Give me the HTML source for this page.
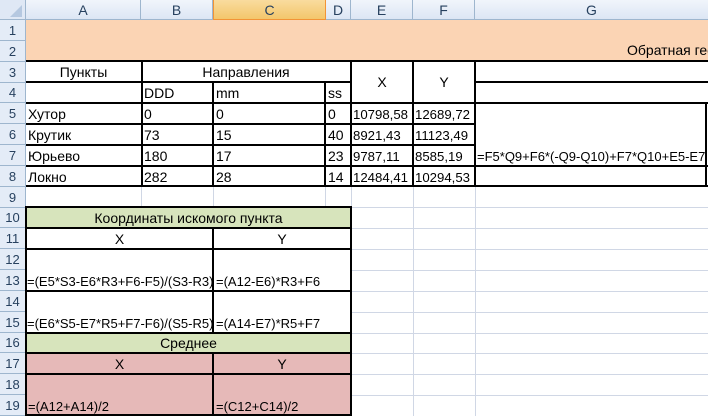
<!DOCTYPE html>
<html><head><meta charset="utf-8"><style>
*{margin:0;padding:0;box-sizing:border-box}
body{width:708px;height:416px;overflow:hidden;background:#fff;position:relative;font-family:"Liberation Sans","DejaVu Sans",sans-serif;font-size:14px;color:#000}
div{position:absolute}
.g{background:#d0d7e5}
.k{background:#000}
.t{white-space:nowrap;line-height:15px}
.n{font-size:13.2px}
.f{font-size:13px}
.hd{background:linear-gradient(#f1f5fb,#dce6f4);color:#27415f;font-size:14px;text-align:center}
.rh{left:0;width:26px;text-align:center;color:#27415f;font-size:13px;line-height:20px;background:#e4ecf7;border-bottom:1px solid #9eb6ce;border-right:1px solid #9eb6ce}
</style></head><body>
<div class="g" style="left:141px;top:20px;width:1px;height:396px"></div>
<div class="g" style="left:213px;top:20px;width:1px;height:396px"></div>
<div class="g" style="left:325px;top:20px;width:1px;height:396px"></div>
<div class="g" style="left:351px;top:20px;width:1px;height:396px"></div>
<div class="g" style="left:413px;top:20px;width:1px;height:396px"></div>
<div class="g" style="left:475px;top:20px;width:1px;height:396px"></div>
<div class="g" style="left:26px;top:207px;width:682px;height:1px"></div>
<div class="g" style="left:351px;top:228px;width:357px;height:1px"></div>
<div class="g" style="left:351px;top:249px;width:357px;height:1px"></div>
<div class="g" style="left:351px;top:270px;width:357px;height:1px"></div>
<div class="g" style="left:351px;top:291px;width:357px;height:1px"></div>
<div class="g" style="left:351px;top:312px;width:357px;height:1px"></div>
<div class="g" style="left:351px;top:333px;width:357px;height:1px"></div>
<div class="g" style="left:351px;top:353px;width:357px;height:1px"></div>
<div class="g" style="left:351px;top:374px;width:357px;height:1px"></div>
<div class="g" style="left:351px;top:395px;width:357px;height:1px"></div>
<div class="g" style="left:475px;top:186px;width:233px;height:1px"></div>
<div style="left:26px;top:20px;width:682px;height:41px;background:#fbd4b4"></div>
<div style="left:26px;top:62px;width:682px;height:124px;background:#fff"></div>
<div style="left:26px;top:207px;width:325px;height:21px;background:#d7e4bc"></div>
<div style="left:26px;top:228px;width:325px;height:105px;background:#fff"></div>
<div style="left:26px;top:333px;width:325px;height:20px;background:#d7e4bc"></div>
<div style="left:26px;top:353px;width:325px;height:63px;background:#e6b9b8"></div>
<div class="hd" style="left:0;top:0;width:708px;height:20px;border-bottom:1px solid #9eb6ce"></div>
<div style="left:0;top:0;width:26px;height:20px;background:#dfe8f5;border-right:1px solid #9eb6ce;border-bottom:1px solid #9eb6ce"></div>
<div style="left:10px;top:5px;width:0;height:0;border-left:12px solid transparent;border-bottom:12px solid #b5c8e0"></div>
<div class="hd" style="left:26px;top:0;width:115px;height:20px;line-height:20px;border-right:1px solid #9eb6ce;border-bottom:1px solid #9eb6ce">A</div>
<div class="hd" style="left:141px;top:0;width:72px;height:20px;line-height:20px;border-right:1px solid #9eb6ce;border-bottom:1px solid #9eb6ce">B</div>
<div class="hd" style="left:213px;top:0;width:113px;height:20px;line-height:20px;background:linear-gradient(#f9dc9e,#f3c66b);border:1px solid #f29436;border-top:none">C</div>
<div class="hd" style="left:326px;top:0;width:25px;height:20px;line-height:20px;border-right:1px solid #9eb6ce;border-bottom:1px solid #9eb6ce">D</div>
<div class="hd" style="left:351px;top:0;width:62px;height:20px;line-height:20px;border-right:1px solid #9eb6ce;border-bottom:1px solid #9eb6ce">E</div>
<div class="hd" style="left:413px;top:0;width:62px;height:20px;line-height:20px;border-right:1px solid #9eb6ce;border-bottom:1px solid #9eb6ce">F</div>
<div class="hd" style="left:475px;top:0;width:233px;height:20px;line-height:20px;border-bottom:1px solid #9eb6ce">G</div>
<div class="rh" style="top:20px;height:21px;line-height:21px">1</div>
<div class="rh" style="top:41px;height:21px;line-height:21px">2</div>
<div class="rh" style="top:62px;height:21px;line-height:21px">3</div>
<div class="rh" style="top:83px;height:20px">4</div>
<div class="rh" style="top:103px;height:21px;line-height:21px">5</div>
<div class="rh" style="top:124px;height:21px;line-height:21px">6</div>
<div class="rh" style="top:145px;height:21px;line-height:21px">7</div>
<div class="rh" style="top:166px;height:21px;line-height:21px">8</div>
<div class="rh" style="top:187px;height:21px;line-height:21px">9</div>
<div class="rh" style="top:208px;height:20px">10</div>
<div class="rh" style="top:228px;height:21px;line-height:21px">11</div>
<div class="rh" style="top:249px;height:21px;line-height:21px">12</div>
<div class="rh" style="top:270px;height:21px;line-height:21px">13</div>
<div class="rh" style="top:291px;height:21px;line-height:21px">14</div>
<div class="rh" style="top:312px;height:21px;line-height:21px">15</div>
<div class="rh" style="top:333px;height:20px">16</div>
<div class="rh" style="top:353px;height:21px;line-height:21px">17</div>
<div class="rh" style="top:374px;height:21px;line-height:21px">18</div>
<div class="rh" style="top:395px;height:21px;line-height:21px">19</div>
<div class="k" style="left:26px;top:60px;width:682px;height:2px"></div>
<div class="k" style="left:26px;top:81px;width:325px;height:2px"></div>
<div class="k" style="left:475px;top:81px;width:233px;height:2px"></div>
<div class="k" style="left:26px;top:102px;width:682px;height:2px"></div>
<div class="k" style="left:26px;top:123px;width:449px;height:2px"></div>
<div class="k" style="left:26px;top:144px;width:449px;height:2px"></div>
<div class="k" style="left:26px;top:165px;width:682px;height:2px"></div>
<div class="k" style="left:26px;top:185px;width:682px;height:2px"></div>
<div class="k" style="left:141px;top:60px;width:2px;height:127px"></div>
<div class="k" style="left:212px;top:81px;width:2px;height:106px"></div>
<div class="k" style="left:324px;top:81px;width:2px;height:106px"></div>
<div class="k" style="left:350px;top:60px;width:2px;height:127px"></div>
<div class="k" style="left:412px;top:60px;width:2px;height:127px"></div>
<div class="k" style="left:474px;top:60px;width:2px;height:127px"></div>
<div class="k" style="left:705px;top:102px;width:2px;height:85px"></div>
<div class="k" style="left:25px;top:206px;width:327px;height:2px"></div>
<div class="k" style="left:25px;top:227px;width:327px;height:2px"></div>
<div class="k" style="left:25px;top:248px;width:327px;height:2px"></div>
<div class="k" style="left:25px;top:290px;width:327px;height:2px"></div>
<div class="k" style="left:25px;top:332px;width:327px;height:2px"></div>
<div class="k" style="left:25px;top:352px;width:327px;height:2px"></div>
<div class="k" style="left:25px;top:373px;width:327px;height:2px"></div>
<div class="k" style="left:25px;top:414px;width:327px;height:2px"></div>
<div class="k" style="left:25px;top:206px;width:2px;height:210px"></div>
<div class="k" style="left:350px;top:206px;width:2px;height:210px"></div>
<div class="k" style="left:212px;top:227px;width:2px;height:106px"></div>
<div class="k" style="left:212px;top:352px;width:2px;height:64px"></div>
<div class="t" style="left:627px;top:43px">Обратная гео</div>
<div class="t" style="left:26px;width:115px;top:65px;text-align:center">Пункты</div>
<div class="t" style="left:141px;width:210px;top:65px;text-align:center">Направления</div>
<div class="t" style="left:351px;width:62px;top:75px;text-align:center">X</div>
<div class="t" style="left:413px;width:62px;top:75px;text-align:center">Y</div>
<div class="t" style="left:144px;top:86px">DDD</div>
<div class="t" style="left:216px;top:86px">mm</div>
<div class="t" style="left:328px;top:86px">ss</div>
<div class="t" style="left:28px;top:107px">Хутор</div>
<div class="t" style="left:144px;top:107px">0</div>
<div class="t" style="left:216px;top:107px">0</div>
<div class="t" style="left:328px;top:107px">0</div>
<div class="t n" style="left:353px;top:107px">10798,58</div>
<div class="t n" style="left:415px;top:107px">12689,72</div>
<div class="t" style="left:28px;top:128px">Крутик</div>
<div class="t" style="left:144px;top:128px">73</div>
<div class="t" style="left:216px;top:128px">15</div>
<div class="t" style="left:328px;top:128px">40</div>
<div class="t n" style="left:353px;top:128px">8921,43</div>
<div class="t n" style="left:415px;top:128px">11123,49</div>
<div class="t" style="left:28px;top:149px">Юрьево</div>
<div class="t" style="left:144px;top:149px">180</div>
<div class="t" style="left:216px;top:149px">17</div>
<div class="t" style="left:328px;top:149px">23</div>
<div class="t n" style="left:353px;top:149px">9787,11</div>
<div class="t n" style="left:415px;top:149px">8585,19</div>
<div class="t f" style="left:477px;top:149px">=F5*Q9+F6*(-Q9-Q10)+F7*Q10+E5-E7</div>
<div class="t" style="left:28px;top:170px">Локно</div>
<div class="t" style="left:144px;top:170px">282</div>
<div class="t" style="left:216px;top:170px">28</div>
<div class="t" style="left:328px;top:170px">14</div>
<div class="t n" style="left:353px;top:170px">12484,41</div>
<div class="t n" style="left:415px;top:170px">10294,53</div>
<div class="t" style="left:26px;width:325px;top:211px;text-align:center">Координаты искомого пункта</div>
<div class="t" style="left:26px;width:187px;top:232px;text-align:center">X</div>
<div class="t" style="left:213px;width:138px;top:232px;text-align:center">Y</div>
<div class="t f" style="left:27px;top:274px">=(E5*S3-E6*R3+F6-F5)/(S3-R3)</div>
<div class="t f" style="left:216px;top:274px">=(A12-E6)*R3+F6</div>
<div class="t f" style="left:27px;top:316px">=(E6*S5-E7*R5+F7-F6)/(S5-R5)</div>
<div class="t f" style="left:216px;top:316px">=(A14-E7)*R5+F7</div>
<div class="t" style="left:26px;width:325px;top:336px;text-align:center">Среднее</div>
<div class="t" style="left:26px;width:187px;top:357px;text-align:center">X</div>
<div class="t" style="left:213px;width:138px;top:357px;text-align:center">Y</div>
<div class="t f" style="left:28px;top:399px">=(A12+A14)/2</div>
<div class="t f" style="left:216px;top:399px">=(C12+C14)/2</div>
</body></html>
